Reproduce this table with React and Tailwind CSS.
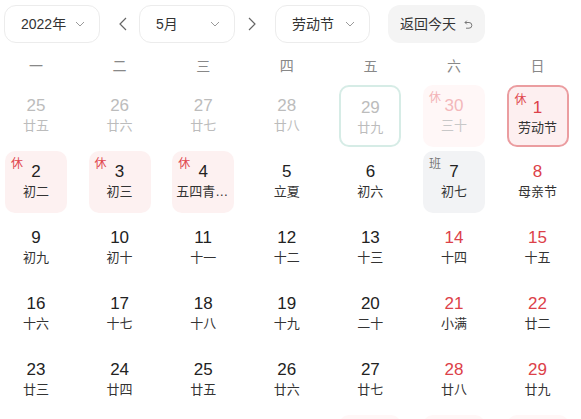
import React from "react";

const weekNames = ["一", "二", "三", "四", "五", "六", "日"];

// d: date, l: lunar, t: tone, tag: 休/班, box: cell look
const rows = [
  [
    { d: 25, l: "廿五", t: "dim" },
    { d: 26, l: "廿六", t: "dim" },
    { d: 27, l: "廿七", t: "dim" },
    { d: 28, l: "廿八", t: "dim" },
    { d: 29, l: "廿九", t: "dim", box: "today" },
    { d: 30, l: "三十", t: "dimRed", tag: "休", box: "restDim" },
    { d: 1, l: "劳动节", t: "red", tag: "休", box: "selected" },
  ],
  [
    { d: 2, l: "初二", tag: "休", box: "rest" },
    { d: 3, l: "初三", tag: "休", box: "rest" },
    { d: 4, l: "五四青年节", tag: "休", box: "rest" },
    { d: 5, l: "立夏" },
    { d: 6, l: "初六" },
    { d: 7, l: "初七", tag: "班", box: "work" },
    { d: 8, l: "母亲节", t: "red" },
  ],
  [
    { d: 9, l: "初九" },
    { d: 10, l: "初十" },
    { d: 11, l: "十一" },
    { d: 12, l: "十二" },
    { d: 13, l: "十三" },
    { d: 14, l: "十四", t: "red" },
    { d: 15, l: "十五", t: "red" },
  ],
  [
    { d: 16, l: "十六" },
    { d: 17, l: "十七" },
    { d: 18, l: "十八" },
    { d: 19, l: "十九" },
    { d: 20, l: "二十" },
    { d: 21, l: "小满", t: "red" },
    { d: 22, l: "廿二", t: "red" },
  ],
  [
    { d: 23, l: "廿三" },
    { d: 24, l: "廿四" },
    { d: 25, l: "廿五" },
    { d: 26, l: "廿六" },
    { d: 27, l: "廿七" },
    { d: 28, l: "廿八", t: "red" },
    { d: 29, l: "廿九", t: "red" },
  ],
];

// next row only peeks in at the bottom edge
const peekRow = ["none", "none", "none", "none", "restDim", "restDim", "restDim"];

const boxClass = {
  none: "",
  today: "border-2 border-[#d6ece6] pt-[8px]",
  restDim: "bg-[#fff7f7]",
  selected: "border-2 border-[#eb9da0] bg-[#fdeff0] pt-[8px]",
  rest: "bg-[#fdf1f1]",
  work: "bg-[#f2f3f5]",
};

const numClass = {
  normal: "text-[#222]",
  red: "text-[#dc4149]",
  dim: "text-[#bcbcbc]",
  dimRed: "text-[#f3b8bb]",
};

const lunarClass = {
  normal: "text-[#333]",
  red: "text-[#333]",
  dim: "text-[#bcbcbc]",
  dimRed: "text-[#c8c8c8]",
};

function Chevron() {
  return (
    <svg width="10" height="6" viewBox="0 0 10 6" fill="none">
      <polyline points="1,1 5,5 9,1" stroke="#9a9a9a" strokeWidth="1" />
    </svg>
  );
}

function Select({ label, width }) {
  return (
    <div
      className={`${width} h-[38px] rounded-[12px] border border-[#ececec] flex items-center justify-between pl-[16px] pr-[14px] text-[14px] text-[#333]`}
    >
      <span>{label}</span>
      <Chevron />
    </div>
  );
}

function Cell({ c }) {
  const tone = c.t || "normal";
  const box = c.box || "none";
  const tagColor =
    c.tag === "班"
      ? "text-[#777]"
      : box === "restDim"
      ? "text-[#f3b3b6]"
      : "text-[#e0454d]";
  return (
    <div
      className={`relative h-[62px] rounded-[10px] flex flex-col items-center pt-[10px] ${boxClass[box]}`}
    >
      {c.tag && (
        <span
          className={`absolute left-[6px] top-[6px] text-[12px] leading-[14px] ${tagColor}`}
        >
          {c.tag}
        </span>
      )}
      <span className={`text-[17px] leading-[22px] ${numClass[tone]}`}>
        {c.d}
      </span>
      <span
        className={`w-full px-[4px] text-center truncate text-[13px] leading-[18px] ${lunarClass[tone]}`}
      >
        {c.l}
      </span>
    </div>
  );
}

export default function App() {
  return (
    <div
      className="w-[581px] h-[419px] overflow-hidden bg-white"
      style={{ fontFamily: '"Liberation Sans", "Noto Sans CJK SC", sans-serif' }}
    >
      {/* toolbar */}
      <div className="flex items-center pt-[5px] pl-[4px]">
        <Select label="2022年" width="w-[96px]" />
        <svg className="ml-[18px]" width="10" height="16" viewBox="0 0 10 16" fill="none">
          <polyline points="8,2 2,8 8,14" stroke="#666" strokeWidth="1.2" />
        </svg>
        <div className="ml-[11px]">
          <Select label="5月" width="w-[96px]" />
        </div>
        <svg className="ml-[12px]" width="10" height="16" viewBox="0 0 10 16" fill="none">
          <polyline points="2,2 8,8 2,14" stroke="#666" strokeWidth="1.2" />
        </svg>
        <div className="ml-[18px]">
          <Select label="劳动节" width="w-[95px]" />
        </div>
        <button className="ml-[18px] w-[97px] h-[38px] rounded-[12px] bg-[#f4f4f4] flex items-center pl-[12px] text-[14px] text-[#333]">
          <span>返回今天</span>
          <svg className="ml-[7px]" width="10" height="11" viewBox="0 0 10 11" fill="none">
            <path
              d="M2 3.5 H6 A2.8 2.8 0 0 1 6 9.2 H3"
              stroke="#777"
              strokeWidth="1"
            />
            <polyline points="3.8,1.7 2,3.5 3.8,5.3" stroke="#777" strokeWidth="1" />
          </svg>
        </button>
      </div>

      {/* week header */}
      <div className="mt-[12px] pl-[5px] grid grid-cols-[repeat(7,62px)] gap-x-[21.6px]">
        {weekNames.map((w) => (
          <div key={w} className="text-center text-[14px] leading-[22px] text-[#888]">
            {w}
          </div>
        ))}
      </div>

      {/* days */}
      <div className="mt-[8px] pl-[5px] grid grid-cols-[repeat(7,62px)] gap-x-[21.6px] gap-y-[4px]">
        {rows.flat().map((c, i) => (
          <Cell key={i} c={c} />
        ))}
        {peekRow.map((b, i) => (
          <div key={"p" + i} className={`h-[62px] rounded-[10px] ${boxClass[b]}`} />
        ))}
      </div>
    </div>
  );
}
